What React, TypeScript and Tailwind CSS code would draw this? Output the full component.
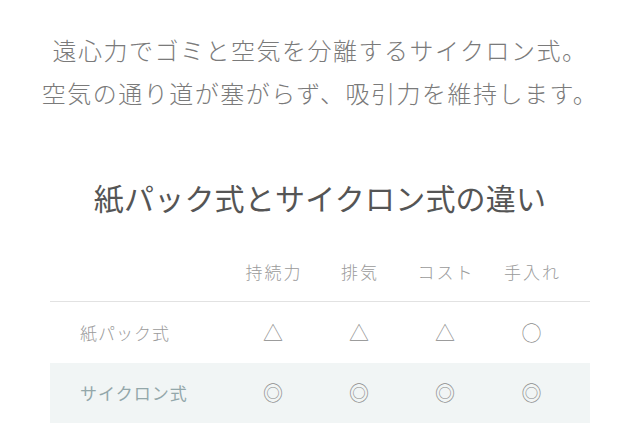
const cols = ["持続力", "排気", "コスト", "手入れ"];

const rows = [
  { name: "紙パック式", marks: ["△", "△", "△", "○"], highlight: false },
  { name: "サイクロン式", marks: ["◎", "◎", "◎", "◎"], highlight: true },
];

export default function App() {
  return (
    <div
      className="w-full min-h-screen bg-white text-center"
      style={{ fontFamily: '"Noto Sans CJK JP", "Noto Sans", sans-serif' }}
    >
      <p className="pt-[28px] text-[24px] leading-[43px] font-light tracking-[1.5px] text-[#7a7a7a]">
        遠心力でゴミと空気を分離するサイクロン式。
        <br />
        空気の通り道が塞がらず、吸引力を維持します。
      </p>

      <h2 className="mt-[61px] text-[30px] leading-[44px] tracking-[0.2px] text-[#555]">
        紙パック式とサイクロン式の違い
      </h2>

      <div className="mx-auto w-[540px] text-[17px] leading-[24px]">
        <div className="grid h-[83px] grid-cols-[180px_86px_86px_86px_87px] items-end pb-[17px] border-b border-[#e2e2e2] text-[#9a9a9a] font-light">
          <div />
          {cols.map((c) => (
            <div key={c} className="tracking-[2px] pl-[2px]">
              {c}
            </div>
          ))}
        </div>
        {rows.map((r) => (
          <div
            key={r.name}
            className={
              r.highlight
                ? "grid h-[60px] grid-cols-[180px_86px_86px_86px_87px] items-center bg-[#f1f5f5]"
                : "grid h-[61px] grid-cols-[180px_86px_86px_86px_87px] items-center"
            }
          >
            <div
              className={
                r.highlight
                  ? "pl-[30px] text-left tracking-[1px] text-[#93a7aa]"
                  : "pl-[30px] text-left tracking-[1px] text-[#9a9a9a] font-light"
              }
            >
              {r.name}
            </div>
            {r.marks.map((m, i) => (
              <div key={i} className="text-[20px] text-[#8a8a8a] font-light">
                {m}
              </div>
            ))}
          </div>
        ))}
      </div>
    </div>
  );
}
